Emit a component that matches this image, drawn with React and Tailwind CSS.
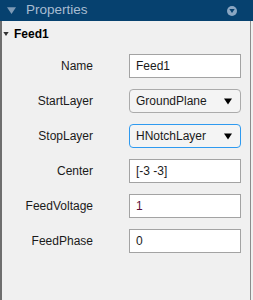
import React from 'react'

const Caret = ({ className }) => (
  <svg viewBox="0 0 8 6" className={className}>
    <path d="M0 0 L8 0 L4 6 Z" fill="currentColor" />
  </svg>
)

const TextField = ({ value, color = 'text-[#1a1a1a]' }) => (
  <div className={`w-[112px] h-[24px] bg-white border border-[#a3a3a3] flex items-center pl-[6px] text-[12px] ${color}`}>
    {value}
  </div>
)

const Dropdown = ({ value, focused }) => (
  <div
    className={`w-[112px] h-[24px] rounded-[4px] border flex items-center justify-between pl-[6px] pr-[8px] text-[12px] text-[#1a1a1a] ${focused ? 'border-[#2e9af0] bg-[#f4f4f4]' : 'border-[#ababab] bg-[#f4f4f4]'}`}
  >
    <span>{value}</span>
    <Caret className="w-[8px] h-[7px] text-black" />
  </div>
)

const Row = ({ label, children }) => (
  <div className="flex items-center">
    <div className="w-[91px] text-right text-[12px] text-[#1a1a1a]">{label}</div>
    <div className="ml-[36px]">{children}</div>
  </div>
)

export default function App() {
  return (
    <div className="w-[253px] h-[300px] bg-[#f0f0f0] flex flex-col" style={{ fontFamily: '"Liberation Sans", Arial, sans-serif' }}>
      <div className="h-[21px] bg-[#06416f] flex items-center shrink-0">
        <Caret className="w-[9px] h-[7px] ml-[7px] text-[#7d9ab6]" />
        <span className="ml-[10px] text-[13.5px] text-[#a8bdd2]">Properties</span>
        <div className="ml-auto mr-[16px] w-[10px] h-[10px] rounded-full bg-[#8aa6c2] flex items-center justify-center">
          <Caret className="w-[6px] h-[4px] text-[#06416f]" />
        </div>
      </div>
      <div className="flex-1 border-l-2 border-[#6e6e6e] flex">
        <div className="flex-1 border-r border-[#8c8c8c]">
          <div className="h-[24px] flex items-center pt-[1px]">
            <Caret className="w-[6px] h-[4px] ml-[1px] text-[#333]" />
            <span className="ml-[5px] text-[12px] font-bold text-black">Feed1</span>
          </div>
          <div className="pt-[9px] flex flex-col gap-[11px]">
            <Row label="Name"><TextField value="Feed1" /></Row>
            <Row label="StartLayer"><Dropdown value="GroundPlane" /></Row>
            <Row label="StopLayer"><Dropdown value="HNotchLayer" focused /></Row>
            <Row label="Center"><TextField value="[-3 -3]" /></Row>
            <Row label="FeedVoltage"><TextField value="1" color="text-[#5a1038]" /></Row>
            <Row label="FeedPhase"><TextField value="0" /></Row>
          </div>
        </div>
        <div className="w-[2px]" />
      </div>
    </div>
  )
}
